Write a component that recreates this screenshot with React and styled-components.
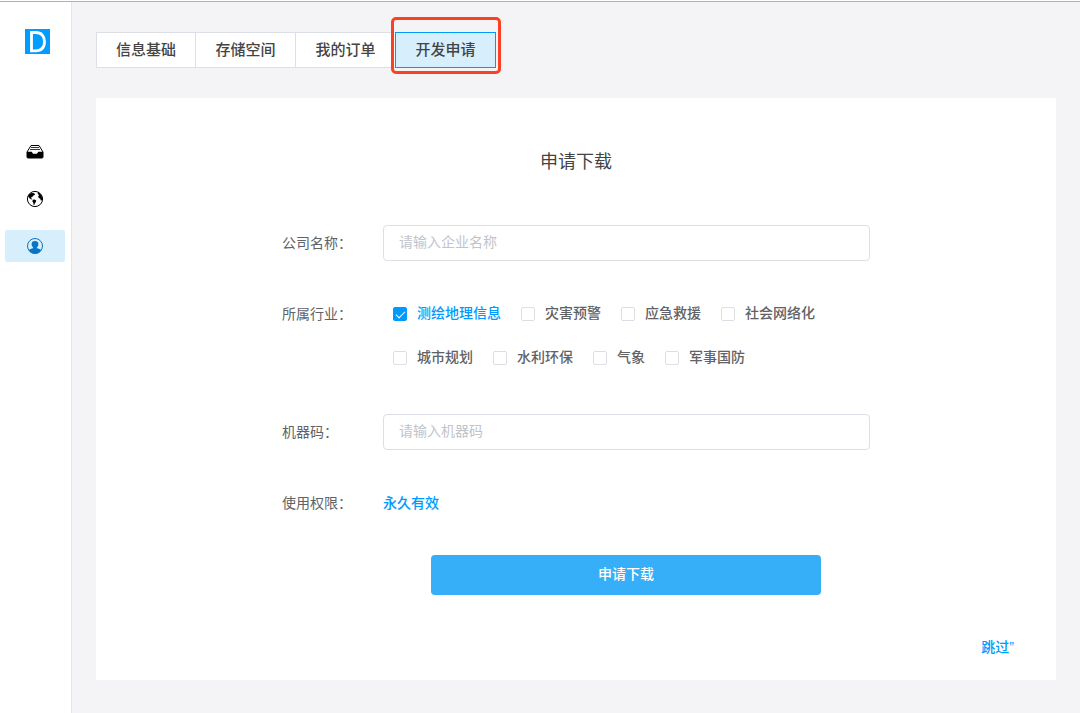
import React, { useState } from 'react';
import styled, { createGlobalStyle } from 'styled-components';

const GlobalStyle = createGlobalStyle`
    * {
        box-sizing: border-box;
    }
    body {
        background: #f4f4f6;
        color: #606266;
        font-family: "Liberation Sans", "Noto Sans CJK SC", sans-serif;
        font-size: 14px;
        line-height: 20px;
        margin: 0;
    }
    button, input {
        font: inherit;
    }
`;

const Window = styled.div`
    background: #fff;
    display: flex;
    flex-direction: column;
    min-height: 100vh;
    padding-top: 1px;
`;

const Page = styled.div`
    background: #f4f4f6;
    border-top: solid 1px #b0b0b2;
    display: flex;
    flex: 1;
`;

const Sidebar = styled.aside`
    align-items: center;
    background: #fff;
    border-right: solid 1px #dfe6ec;
    display: flex;
    flex: none;
    flex-direction: column;
    padding: 27px 6px 0 5px;
    width: 72px;
`;

const LogoLink = styled.a`
    display: block;
    height: 25px;
    margin-left: 5px;
    width: 25px;
`;

const SideNav = styled.nav`
    display: flex;
    flex-direction: column;
    gap: 15px;
    margin-top: 82px;
    width: 100%;
`;

const SideLink = styled.a`
    align-items: center;
    background: ${props => props.$active ? '#d7effd' : 'none'};
    border-radius: 2px;
    color: ${props => props.$active ? '#0a74c4' : '#000'};
    display: flex;
    height: 32px;
    justify-content: center;
`;

const Main = styled.main`
    flex: 1;
    min-width: 0;
    padding: 30px 24px 33px;
`;

const TabBar = styled.div`
    display: flex;
    height: 36px;
`;

const TabSlot = styled.div`
    position: relative;
`;

const Tab = styled.button`
    background: ${props => props.$active ? '#d7effd' : '#fff'};
    border: solid 1px ${props => props.$active ? '#009aff' : '#dcdfe6'};
    border-left-width: 0;
    box-shadow: ${props => props.$active ? '-1px 0 0 #009aff' : 'none'};
    color: #444;
    cursor: pointer;
    font-size: 15px;
    font-weight: 500;
    height: 36px;
    min-width: 100px;
    padding: 0 19px;
    white-space: nowrap;
    ${TabSlot}:first-child & {
        border-left-width: 1px;
    }
`;

const Highlight = styled.span`
    border: solid 3px #fb4023;
    border-radius: 5px;
    inset: -15px -5px -6px;
    pointer-events: none;
    position: absolute;
`;

const Panel = styled.section`
    background: #fff;
    margin-top: 30px;
    padding: 52px 42px 23px;
`;

const Title = styled.h1`
    color: #444;
    font-size: 18px;
    font-weight: 400;
    line-height: 24px;
    margin: 0;
    text-align: center;
`;

const Form = styled.form`
    margin: 51px auto 0;
    max-width: 588px;
`;

const Field = styled.div`
    display: grid;
    grid-template-columns: 101px 1fr;
    margin-bottom: ${props => props.$gap}px;
`;

const FieldLabel = styled.label`
    color: #606266;
    line-height: 36px;
`;

const TextInput = styled.input`
    background: #fff;
    border: solid 1px #dcdfe6;
    border-radius: 4px;
    color: #606266;
    height: 36px;
    outline: none;
    padding: 0 15px 2px;
    width: 100%;
    &::placeholder {
        color: #c0c4cc;
    }
    &:focus {
        border-color: #009aff;
    }
`;

const CheckboxGroup = styled.div`
    display: flex;
    flex-wrap: wrap;
    gap: 8px 20px;
    padding-left: 10px;
`;

const CheckboxLabel = styled.label`
    align-items: center;
    color: ${props => props.$checked ? '#009aff' : '#606266'};
    cursor: pointer;
    display: flex;
    font-weight: 500;
    gap: 10px;
    height: 36px;
`;

const CheckboxText = styled.span`
    padding-bottom: 2px;
`;

const Checkbox = styled.input`
    appearance: none;
    background: #fff;
    border: solid 1px #dcdfe6;
    border-radius: 2px;
    display: grid;
    height: 14px;
    margin: 0;
    place-items: center;
    width: 14px;
    &:checked {
        background: #009aff;
        border-color: #009aff;
    }
    &:checked::after {
        border: solid #fff;
        border-width: 0 1px 1px 0;
        content: '';
        height: 8px;
        margin-bottom: 2px;
        transform: rotate(45deg);
        width: 4px;
    }
`;

const Permission = styled.output`
    color: #009aff;
    font-weight: 500;
    line-height: 36px;
`;

const FormActions = styled.div`
    margin-left: 100px;
`;

const SubmitButton = styled.button`
    background: #36aff8;
    border: none;
    border-radius: 4px;
    color: #fff;
    cursor: pointer;
    display: block;
    font-weight: 500;
    height: 40px;
    margin: 0 auto;
    max-width: 100%;
    padding: 0 0 2px;
    width: 390px;
`;

const Footer = styled.footer`
    display: flex;
    justify-content: flex-end;
    margin-top: 42px;
`;

const SkipLink = styled.a`
    color: #009aff;
    font-weight: 500;
    text-decoration: none;
`;

const TABS = ['信息基础', '存储空间', '我的订单', '开发申请'];

const INDUSTRIES = [
    '测绘地理信息',
    '灾害预警',
    '应急救援',
    '社会网络化',
    '城市规划',
    '水利环保',
    '气象',
    '军事国防'
];

const Logo = () => (
    <svg width="25" height="25" viewBox="0 0 25 25" aria-hidden="true">
        <rect width="25" height="25" fill="#009cff" />
        <path
            d="M6.500 3.500h4c6 0 9 3.300 9 9s-3 9.300-9 9.300h-4z"
            fill="none"
            stroke="#fff"
            strokeWidth="2.800" />
    </svg>
);

const TrayIcon = () => (
    <svg width="18" height="14" viewBox="0 0 18 14" aria-hidden="true">
        <path d="M5 .5h8l4 6.500v5a1 1 0 0 1-1 1H2a1 1 0 0 1-1-1V7z" fill="#fff" stroke="#000" strokeLinejoin="round" />
        <path d="M5 2.500h8M4 4.500h10" stroke="#000" strokeWidth=".8" />
        <path d="M1 6.800h4.800l1.200 2h4l1.200-2H17V12a1 1 0 0 1-1 1H2a1 1 0 0 1-1-1z" fill="#000" />
    </svg>
);

const GlobeIcon = () => (
    <svg width="18" height="18" viewBox="0 0 18 18" aria-hidden="true">
        <circle cx="9" cy="9" r="7.600" fill="#fff" stroke="#000" />
        <path d="M2 6.500C2.800 4.400 4 3.300 5.600 3l2.600.3 1 1.200-1.600.8-.6 1.200-1.500.4-.4 1.300 1.200.9-.6.500-1.800-.9-1.200-1.600z" />
        <path d="M6.700 9.800l1.800-.3 1.700 1.100-.3 1.500-1.100 1.100-.5 1.900-.8-.3-.2-2.100-.9-1.300z" />
        <path d="M11.600 2.200l2.100 1 1.800 2.300.8 2.800-.4 2-1.100.3-.5-1.900-1.500-.6-.6-1.600.8-1.400-1.200-1z" />
    </svg>
);

const PersonIcon = () => (
    <svg width="18" height="18" viewBox="0 0 18 18" aria-hidden="true">
        <circle cx="9" cy="9" r="7.500" fill="none" stroke="currentColor" />
        <path
            d="M9 4a3.400 3.300 0 0 1 3.400 3.300c0 1.400-.6 2.500-1.500 3.100v.8c1.600.5 3.500.8 4.400 2A7.800 7.800 0 0 1 9 16.800a7.800 7.800 0 0 1-6.300-3.600c.9-1.200 2.800-1.500 4.400-2v-.8c-.9-.6-1.500-1.700-1.500-3.100A3.400 3.300 0 0 1 9 4z"
            fill="currentColor" />
    </svg>
);

const App = () => {
    const [activeTab, setActiveTab] = useState('开发申请');
    const [selected, setSelected] = useState(['测绘地理信息']);

    const toggleIndustry = name => {
        setSelected(selected.includes(name)
            ? selected.filter(item => item !== name)
            : [...selected, name]);
    };

    return (
        <Window>
            <GlobalStyle />
            <Page>
                <Sidebar>
                    <LogoLink href="#home" aria-label="首页"><Logo /></LogoLink>
                    <SideNav>
                        <SideLink href="#files" aria-label="文件"><TrayIcon /></SideLink>
                        <SideLink href="#map" aria-label="地图"><GlobeIcon /></SideLink>
                        <SideLink href="#account" aria-label="账户" $active><PersonIcon /></SideLink>
                    </SideNav>
                </Sidebar>
                <Main>
                    <TabBar>
                        {TABS.map(name => (
                            <TabSlot key={name}>
                                <Tab
                                    type="button"
                                    $active={name === activeTab}
                                    onClick={() => setActiveTab(name)}>
                                    {name}
                                </Tab>
                                {name === activeTab && <Highlight />}
                            </TabSlot>
                        ))}
                    </TabBar>
                    <Panel>
                        <Title>申请下载</Title>
                        <Form onSubmit={evt => evt.preventDefault()}>
                            <Field $gap={35}>
                                <FieldLabel htmlFor="company">公司名称：</FieldLabel>
                                <TextInput id="company" type="text" placeholder="请输入企业名称" />
                            </Field>
                            <Field $gap={38} role="group" aria-labelledby="industry">
                                <FieldLabel as="span" id="industry">所属行业：</FieldLabel>
                                <CheckboxGroup>
                                    {INDUSTRIES.map(name => (
                                        <CheckboxLabel key={name} $checked={selected.includes(name)}>
                                            <Checkbox
                                                type="checkbox"
                                                checked={selected.includes(name)}
                                                onChange={() => toggleIndustry(name)} />
                                            <CheckboxText>{name}</CheckboxText>
                                        </CheckboxLabel>
                                    ))}
                                </CheckboxGroup>
                            </Field>
                            <Field $gap={35}>
                                <FieldLabel htmlFor="machine">机器码：</FieldLabel>
                                <TextInput id="machine" type="text" placeholder="请输入机器码" />
                            </Field>
                            <Field $gap={34}>
                                <FieldLabel htmlFor="permission">使用权限：</FieldLabel>
                                <Permission id="permission">永久有效</Permission>
                            </Field>
                            <FormActions>
                                <SubmitButton type="submit">申请下载</SubmitButton>
                            </FormActions>
                        </Form>
                        <Footer>
                            <SkipLink href="#skip">跳过”</SkipLink>
                        </Footer>
                    </Panel>
                </Main>
            </Page>
        </Window>
    );
};

export default App;
